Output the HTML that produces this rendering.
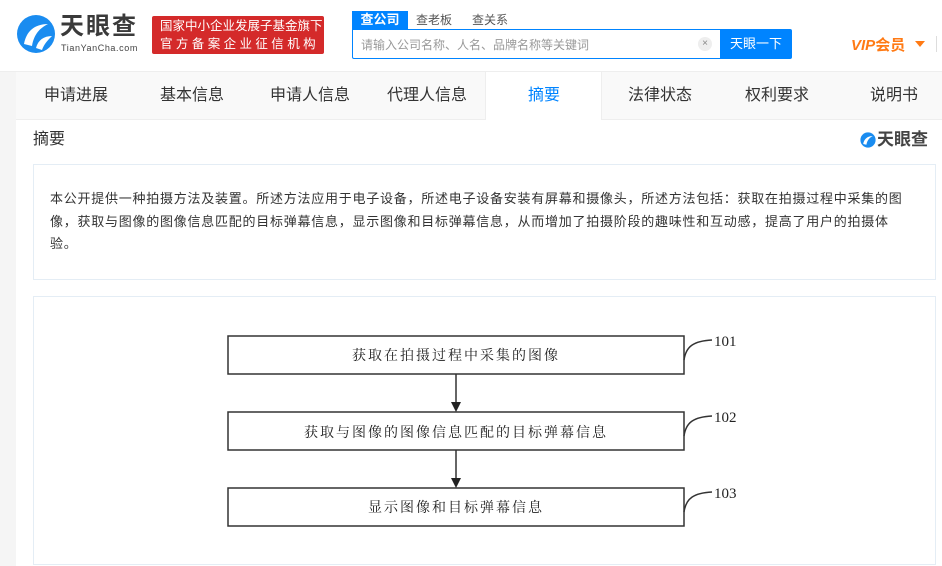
<!DOCTYPE html>
<html><head><meta charset="utf-8"><style>
*{margin:0;padding:0;box-sizing:border-box}
body{width:942px;height:566px;overflow:hidden;background:#fff;font-family:"Liberation Sans","Noto Sans CJK SC",sans-serif;position:relative;color:#333}
.a{position:absolute;white-space:nowrap}
</style></head><body>
<div class="a" style="left:0;top:0;width:942px;height:72px;background:#fff;border-bottom:1px solid #eee"></div>
<svg class="a" style="left:16px;top:14px" width="40" height="40" viewBox="0 0 40 40">
<circle cx="20" cy="20" r="19" fill="#1a8cf0"/>
<path d="M8 30 C10 18 18 10 32 10 C24 14 18 20 16 32 Z" fill="#fff"/>
<path d="M20 34 C22 26 28 22 36 22 C32 26 28 30 26 36 Z" fill="#fff"/>
</svg>
<div class="a" style="left:60px;top:12px;font-size:24px;line-height:30px;font-weight:bold;color:#3a3a3a;letter-spacing:2px">天眼查</div>
<div class="a" style="left:61px;top:43px;font-size:9px;line-height:11px;color:#444;letter-spacing:0.6px">TianYanCha.com</div>
<div class="a" style="left:152px;top:16px;width:172px;height:38px;background:#d42a2a;border-radius:2px;color:#fff;font-size:12.5px;line-height:18px;padding:1px 0 0 8px;overflow:hidden">国家中小企业发展子基金旗下<br><span style="letter-spacing:3.4px">官方备案企业征信机构</span></div>
<div class="a" style="left:352px;top:11px;width:56px;height:18px;background:#0084ff;color:#fff;font-size:13px;font-weight:bold;text-align:center;line-height:18px">查公司</div>
<div class="a" style="left:416px;top:11px;font-size:12px;color:#555;line-height:18px">查老板</div>
<div class="a" style="left:472px;top:11px;font-size:12px;color:#555;line-height:18px">查关系</div>
<div class="a" style="left:352px;top:29px;width:370px;height:30px;border:1px solid #0084ff;border-radius:0 0 0 2px"></div>
<div class="a" style="left:361px;top:36px;font-size:12px;color:#999">请输入公司名称、人名、品牌名称等关键词</div>
<div class="a" style="left:698px;top:37px;width:14px;height:14px;border-radius:7px;background:#eee;color:#888;font-size:10px;text-align:center;line-height:14px">×</div>
<div class="a" style="left:720px;top:29px;width:72px;height:30px;background:#0084ff;color:#fff;font-size:13px;text-align:center;line-height:30px;border-radius:0 2px 2px 0">天眼一下</div>
<div class="a" style="left:851px;top:34px;font-size:15px;font-weight:bold;color:#ff7a14;font-style:italic">VIP<span style="font-style:normal">会员</span></div>
<div class="a" style="left:915px;top:41px;width:0;height:0;border-left:5px solid transparent;border-right:5px solid transparent;border-top:6px solid #ff7a14"></div>
<div class="a" style="left:936px;top:36px;width:1px;height:16px;background:#ddd"></div>
<div class="a" style="left:0;top:72px;width:16px;height:494px;background:#f5f5f5"></div>
<div class="a" style="left:16px;top:72px;width:926px;height:48px;background:#f9f9f9;border-bottom:1px solid #eee"></div>
<div class="a" style="left:485px;top:72px;width:117px;height:48px;background:#fff;border-left:1px solid #eee;border-right:1px solid #eee"></div>
<div class="a" style="top:85px;left:0;width:942px;font-size:16px;line-height:22px;color:#333">
<span class="a" style="left:44px">申请进展</span>
<span class="a" style="left:160px">基本信息</span>
<span class="a" style="left:270px">申请人信息</span>
<span class="a" style="left:387px">代理人信息</span>
<span class="a" style="left:528px;color:#0084ff">摘要</span>
<span class="a" style="left:628px">法律状态</span>
<span class="a" style="left:745px">权利要求</span>
<span class="a" style="left:870px">说明书</span>
</div>
<div class="a" style="left:33px;top:129px;font-size:16px;line-height:22px;color:#333">摘要</div>
<svg class="a" style="left:860px;top:132px" width="16" height="16" viewBox="0 0 40 40"><circle cx="20" cy="20" r="19" fill="#1a8cf0"/><path d="M8 30 C10 18 18 10 32 10 C24 14 18 20 16 32 Z" fill="#fff"/></svg>
<div class="a" style="left:877px;top:129px;font-size:17px;line-height:22px;font-weight:bold;color:#444">天眼查</div>
<div class="a" style="left:33px;top:164px;width:903px;height:116px;border:1px solid #e4edf5"></div>
<div class="a" style="left:50px;top:188px;font-size:13px;line-height:22.5px;color:#333;letter-spacing:0.75px">本公开提供一种拍摄方法及装置。所述方法应用于电子设备，所述电子设备安装有屏幕和摄像头，所述方法包括：获取在拍摄过程中采集的图<br>像，获取与图像的图像信息匹配的目标弹幕信息，显示图像和目标弹幕信息，从而增加了拍摄阶段的趣味性和互动感，提高了用户的拍摄体<br>验。</div>
<div class="a" style="left:33px;top:296px;width:903px;height:269px;border:1px solid #e4edf5"></div>
<svg class="a" style="left:0;top:0" width="942" height="566">
<g fill="none" stroke="#333" stroke-width="1.5">
<rect x="228" y="336" width="456" height="38"/>
<rect x="228" y="412" width="456" height="38"/>
<rect x="228" y="488" width="456" height="38"/>
<line x1="456" y1="374" x2="456" y2="404"/>
<line x1="456" y1="450" x2="456" y2="480"/>
<path d="M684 360 C686 346 694 341 712 340"/>
<path d="M684 436 C686 422 694 417 712 416"/>
<path d="M684 512 C686 498 694 493 712 492"/>
</g>
<path d="M451 402 L461 402 L456 412 Z M451 478 L461 478 L456 488 Z" fill="#222"/>
<g font-family="Liberation Serif,'Noto Serif CJK SC',serif" font-size="15" fill="#222">
<text x="714" y="346">101</text><text x="714" y="422">102</text><text x="714" y="498">103</text>
</g>
<g font-family="'Noto Serif CJK SC',serif" font-size="14" fill="#222" text-anchor="middle" letter-spacing="2">
<text x="456" y="360">获取在拍摄过程中采集的图像</text>
<text x="456" y="437">获取与图像的图像信息匹配的目标弹幕信息</text>
<text x="456" y="512">显示图像和目标弹幕信息</text>
</g>
</svg>
</body></html>
